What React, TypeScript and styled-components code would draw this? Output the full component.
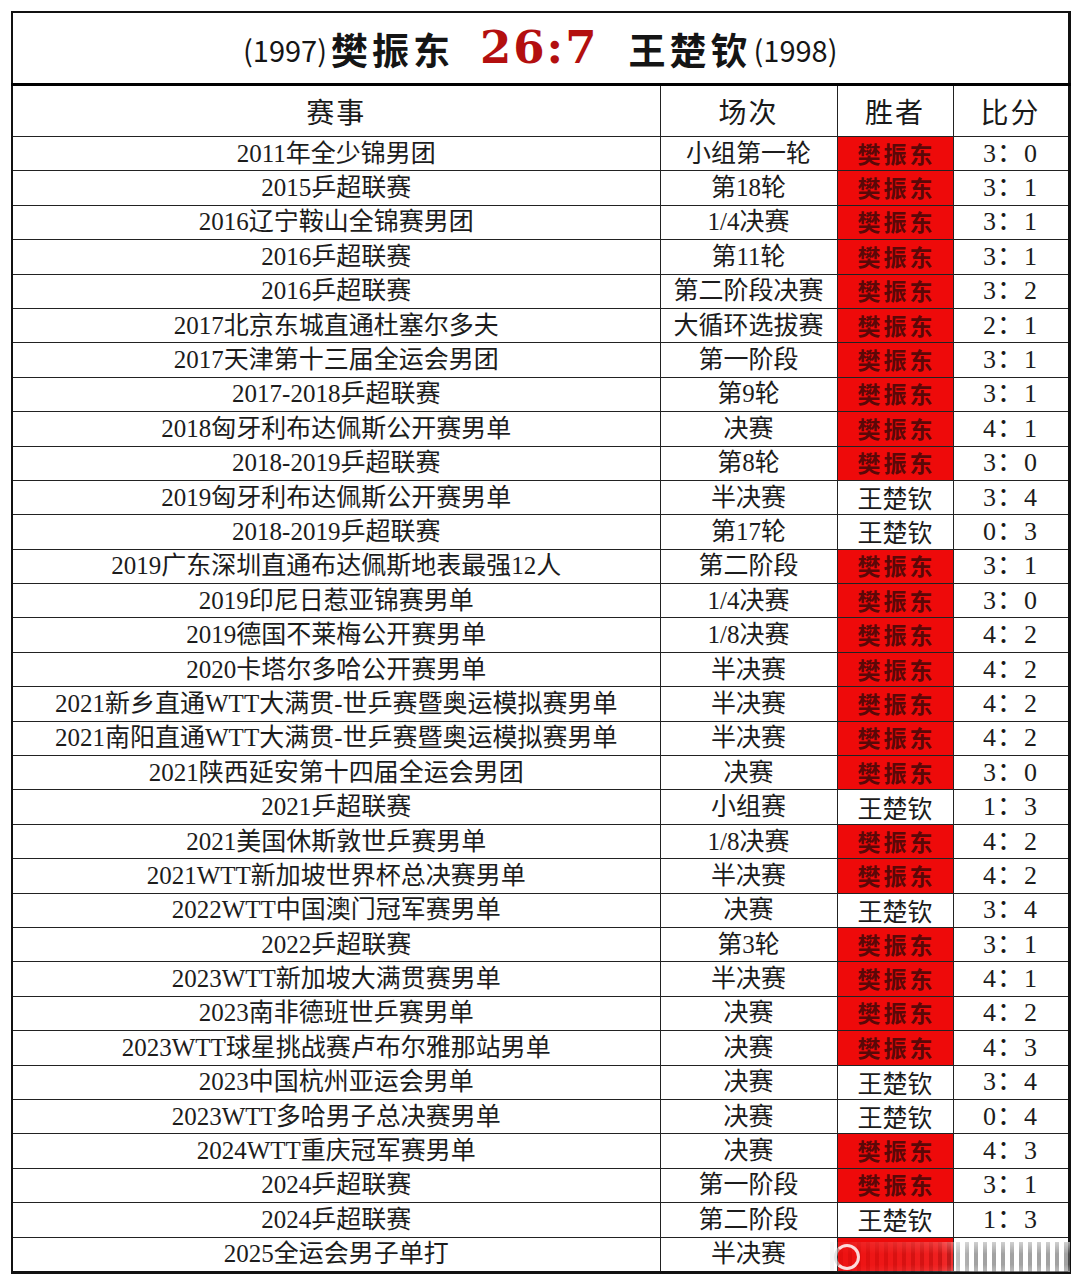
import React from "react";
import styled, { createGlobalStyle } from "styled-components";

const GlobalStyle = createGlobalStyle`
  html, body { margin: 0; padding: 0; background: #ffffff; }
  body { font-family: "Liberation Serif", "Noto Sans CJK SC", serif; color: #1a1a1a; }
`;

type Row = [string, string, "F" | "W", string];

const rows: Row[] = [
  ["2011年全少锦男团", "小组第一轮", "F", "3：0"],
  ["2015乒超联赛", "第18轮", "F", "3：1"],
  ["2016辽宁鞍山全锦赛男团", "1/4决赛", "F", "3：1"],
  ["2016乒超联赛", "第11轮", "F", "3：1"],
  ["2016乒超联赛", "第二阶段决赛", "F", "3：2"],
  ["2017北京东城直通杜塞尔多夫", "大循环选拔赛", "F", "2：1"],
  ["2017天津第十三届全运会男团", "第一阶段", "F", "3：1"],
  ["2017-2018乒超联赛", "第9轮", "F", "3：1"],
  ["2018匈牙利布达佩斯公开赛男单", "决赛", "F", "4：1"],
  ["2018-2019乒超联赛", "第8轮", "F", "3：0"],
  ["2019匈牙利布达佩斯公开赛男单", "半决赛", "W", "3：4"],
  ["2018-2019乒超联赛", "第17轮", "W", "0：3"],
  ["2019广东深圳直通布达佩斯地表最强12人", "第二阶段", "F", "3：1"],
  ["2019印尼日惹亚锦赛男单", "1/4决赛", "F", "3：0"],
  ["2019德国不莱梅公开赛男单", "1/8决赛", "F", "4：2"],
  ["2020卡塔尔多哈公开赛男单", "半决赛", "F", "4：2"],
  ["2021新乡直通WTT大满贯-世乒赛暨奥运模拟赛男单", "半决赛", "F", "4：2"],
  ["2021南阳直通WTT大满贯-世乒赛暨奥运模拟赛男单", "半决赛", "F", "4：2"],
  ["2021陕西延安第十四届全运会男团", "决赛", "F", "3：0"],
  ["2021乒超联赛", "小组赛", "W", "1：3"],
  ["2021美国休斯敦世乒赛男单", "1/8决赛", "F", "4：2"],
  ["2021WTT新加坡世界杯总决赛男单", "半决赛", "F", "4：2"],
  ["2022WTT中国澳门冠军赛男单", "决赛", "W", "3：4"],
  ["2022乒超联赛", "第3轮", "F", "3：1"],
  ["2023WTT新加坡大满贯赛男单", "半决赛", "F", "4：1"],
  ["2023南非德班世乒赛男单", "决赛", "F", "4：2"],
  ["2023WTT球星挑战赛卢布尔雅那站男单", "决赛", "F", "4：3"],
  ["2023中国杭州亚运会男单", "决赛", "W", "3：4"],
  ["2023WTT多哈男子总决赛男单", "决赛", "W", "0：4"],
  ["2024WTT重庆冠军赛男单", "决赛", "F", "4：3"],
  ["2024乒超联赛", "第一阶段", "F", "3：1"],
  ["2024乒超联赛", "第二阶段", "W", "1：3"],
  ["2025全运会男子单打", "半决赛", "F", ""],
];

const Page = styled.div`
  padding: 11px 0 10px 11px;
`;

const Table = styled.table`
  width: 1059px;
  border-collapse: collapse;
  table-layout: fixed;
  border: 2px solid #111;
  border-right-width: 3px;
  border-bottom-width: 3px;
`;

const TitleCell = styled.td`
  height: 70px;
  border-bottom: 3px solid #000;
  text-align: center;
  padding: 0;
`;

const TitleLine = styled.div`
  display: flex;
  align-items: center;
  justify-content: center;
  font-family: "Noto Sans CJK SC", "Noto Sans", sans-serif;
  color: #151515;
  padding-top: 2px;
`;

const Born = styled.span`
  font-size: 29px;
  font-weight: 400;
`;

const Name = styled.span<{ $gapL?: number; $gapR?: number }>`
  font-size: 37px;
  font-weight: 700;
  letter-spacing: 4px;
  margin-left: ${(p) => p.$gapL ?? 0}px;
  margin-right: ${(p) => p.$gapR ?? 0}px;
`;

const Score = styled.span`
  font-family: "DejaVu Serif", "Liberation Serif", serif;
  font-size: 45px;
  font-weight: 700;
  color: #b30f0f;
  letter-spacing: 2px;
  margin-right: 30px;
  margin-top: -4px;
`;

const HeadCell = styled.th`
  height: 50px;
  font-family: "Liberation Serif", "Noto Sans CJK SC", serif;
  font-size: 28px;
  font-weight: 400;
  color: #1a1a1a;
  border: 1.5px solid #222;
  border-top: none;
  padding: 0;
  letter-spacing: 2px;
`;

const Cell = styled.td<{ $win?: boolean }>`
  height: 33.4px;
  border: 1.5px solid #222;
  text-align: center;
  padding: 0;
  font-size: 25px;
  line-height: 30px;
  white-space: nowrap;
  color: #1c1c1c;
  position: relative;
  background: ${(p) => (p.$win ? "#ee0a0a" : "transparent")};
`;

const Winner = styled.span<{ $fan: boolean }>`
  display: inline-block;
  font-family: "Noto Sans CJK SC", sans-serif;
  font-size: ${(p) => (p.$fan ? "23px" : "25px")};
  font-weight: ${(p) => (p.$fan ? 700 : 400)};
  color: ${(p) => (p.$fan ? "#5a0808" : "#1c1c1c")};
  letter-spacing: ${(p) => (p.$fan ? "3px" : "0")};
  margin-right: ${(p) => (p.$fan ? "-3px" : "0")};
  transform: translateY(${(p) => (p.$fan ? "0px" : "1px")});
`;

const ScoreText = styled.span`
  font-size: 26px;
  letter-spacing: 1px;
`;

const Watermark = styled.div`
  position: absolute;
  left: -8px;
  top: 4px;
  width: 240px;
  height: 30px;
  background:
    linear-gradient(180deg, rgba(255,255,255,0.5), rgba(255,255,255,0) 40%, rgba(255,255,255,0) 75%, rgba(255,255,255,0.3)),
    repeating-linear-gradient(90deg, rgba(70,70,70,0.5) 0 4px, rgba(255,255,255,0.25) 4px 9px);
  -webkit-mask-image: linear-gradient(90deg, rgba(0,0,0,0.1), rgba(0,0,0,0.35) 45%, #000 60%, #000);
  mask-image: linear-gradient(90deg, rgba(0,0,0,0.1), rgba(0,0,0,0.35) 45%, #000 60%, #000);
`;

const WatermarkLogo = styled.div`
  position: absolute;
  left: -4px;
  top: 6px;
  width: 20px;
  height: 20px;
  border-radius: 50%;
  border: 3px solid rgba(255,255,255,0.85);
  border-left-color: rgba(210,210,210,0.6);
`;

export default function App() {
  return (
    <>
      <GlobalStyle />
      <Page>
        <Table>
          <colgroup>
            <col style={{ width: 648 }} />
            <col style={{ width: 177 }} />
            <col style={{ width: 116 }} />
            <col style={{ width: 116 }} />
          </colgroup>
          <thead>
            <tr>
              <TitleCell colSpan={4}>
                <TitleLine>
                  <Born>(1997)</Born>
                  <Name $gapL={4} $gapR={26}>樊振东</Name>
                  <Score>26:7</Score>
                  <Name $gapR={2}>王楚钦</Name>
                  <Born>(1998)</Born>
                </TitleLine>
              </TitleCell>
            </tr>
            <tr>
              <HeadCell>赛事</HeadCell>
              <HeadCell>场次</HeadCell>
              <HeadCell>胜者</HeadCell>
              <HeadCell>比分</HeadCell>
            </tr>
          </thead>
          <tbody>
            {rows.map((r, i) => {
              const fan = r[2] === "F";
              const last = i === rows.length - 1;
              return (
                <tr key={i}>
                  <Cell>{r[0]}</Cell>
                  <Cell>{r[1]}</Cell>
                  <Cell $win={fan}>
                    {!last && <Winner $fan={fan}>{fan ? "樊振东" : "王楚钦"}</Winner>}
                    {last && (
                      <>
                        <Watermark />
                        <WatermarkLogo />
                      </>
                    )}
                  </Cell>
                  <Cell>
                    <ScoreText>{r[3]}</ScoreText>
                  </Cell>
                </tr>
              );
            })}
          </tbody>
        </Table>
      </Page>
    </>
  );
}
